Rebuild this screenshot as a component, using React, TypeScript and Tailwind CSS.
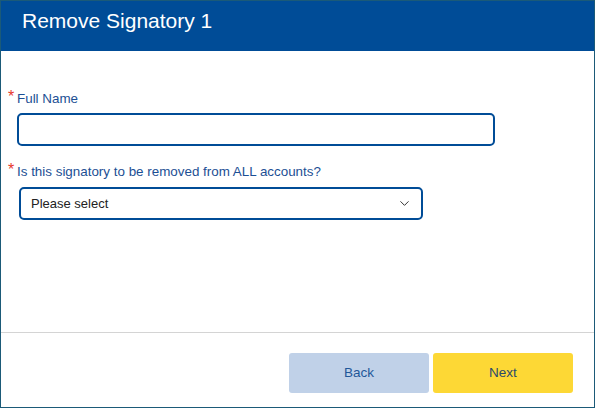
import { ChevronDown } from "lucide-react";

function Label({ text }: { text: string }) {
  return (
    <div className="flex items-start text-[13.4px] leading-[15px] text-[#1c4f94]">
      <span className="text-[#e8382b] text-[16px] leading-[12px] w-[9px]">*</span>
      <span>{text}</span>
    </div>
  );
}

export default function App() {
  return (
    <div className="w-[595px] h-[408px] bg-white border border-[#1b5a78] flex flex-col font-['Liberation_Sans',Arial,sans-serif]">
      <div className="h-[50px] bg-[#004c97] pl-[21px] pt-[8px]">
        <h1 className="text-white text-[21px] leading-[24px]">Remove Signatory 1</h1>
      </div>

      <div className="flex-1 pl-[7px] pt-[40px]">
        <Label text="Full Name" />
        <input
          className="block mt-[7px] ml-[9px] w-[478px] h-[33px] border-2 border-[#004c97] rounded-[5px] outline-none px-2 text-[13px]"
        />

        <div className="mt-[18px]">
          <Label text="Is this signatory to be removed from ALL accounts?" />
        </div>
        <div className="mt-[8px] ml-[11px] w-[404px] h-[33px] border-2 border-[#004c97] rounded-[5px] flex items-center justify-between pl-[10px] pr-[9px] text-[13px] text-[#222]">
          <span>Please select</span>
          <ChevronDown className="w-[15px] h-[15px] text-[#333]" strokeWidth={1.6} />
        </div>
      </div>

      <div className="border-t border-[#d4d4d4] pt-[20px] pb-[14px] pr-[21px] flex justify-end gap-[4px]">
        <button className="w-[140px] h-10 rounded-[3px] bg-[#c0d1e8] text-[#1f5799] text-[13.5px]">Back</button>
        <button className="w-[140px] h-10 rounded-[3px] bg-[#fdd835] text-[#2c4a6b] text-[13.5px]">Next</button>
      </div>
    </div>
  );
}
